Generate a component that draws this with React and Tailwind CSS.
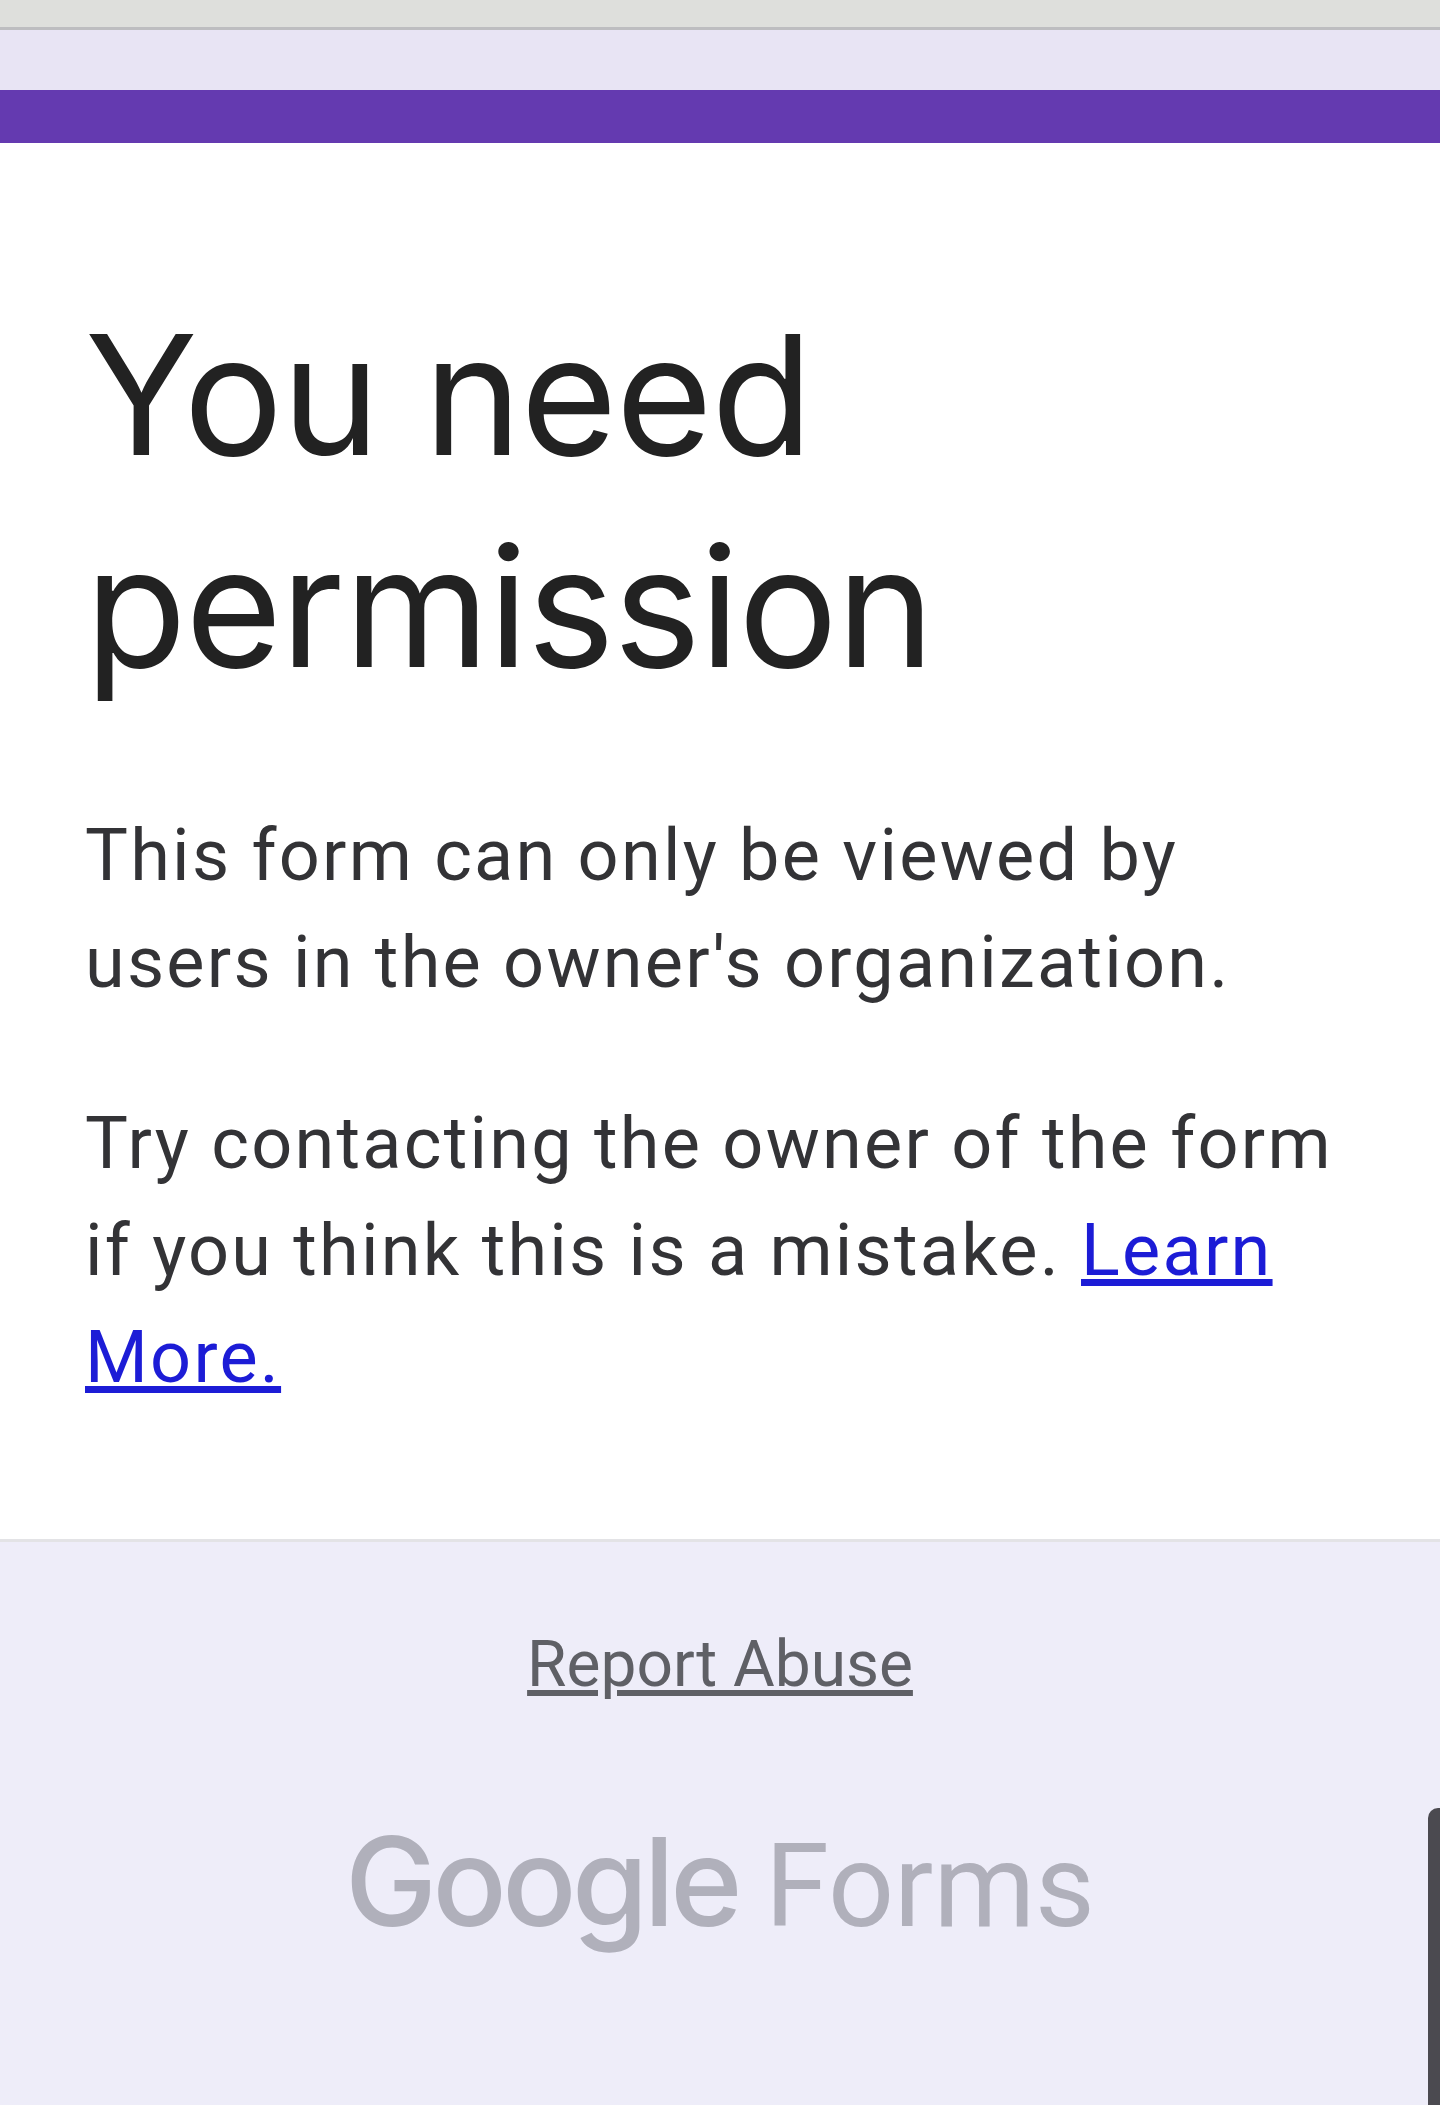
export default function App() {
  return (
    <div className="relative flex h-[2105px] w-[1440px] flex-col overflow-hidden bg-[#eeedf9] font-['Roboto',sans-serif]">
      <div className="h-[27px] bg-[#dedfdc] border-b-[3px] border-[#bdbdc0] box-content"></div>
      <div className="h-[60px] bg-[#e8e4f4]"></div>
      <div className="h-[53px] bg-[#643ab0]"></div>
      <main className="h-[1399px] border-b-[3px] border-[#e3e3e6] bg-white pl-[85px] pr-[87px] pt-[146px]">
        <h1 className="font-['Inter',sans-serif] text-[166px] leading-[212px] font-[380] tracking-[-1.4px] text-[#222222]">You need<br />permission</h1>
        <p className="mt-[89px] text-[72px] leading-[107px] tracking-[2.25px] text-[#333336]">This form can only be viewed by users in the owner's organization.</p>
        <p className="mt-[74px] text-[72px] leading-[107px] tracking-[2.25px] text-[#333336]">Try contacting the owner of the form if you think this is a mistake. <a className="text-[#1c1cd6] underline">Learn More.</a></p>
      </main>
      <footer className="flex flex-col items-center pt-[88px]">
        <a className="text-[64px] leading-[70px] text-[#5f6066] underline">Report Abuse</a>
        <div className="mt-[117px] flex items-baseline gap-[27px] text-[#b0b0bb]">
          <span className="font-['Inter',sans-serif] text-[123px] leading-[130px] font-medium tracking-[-4.5px]">Google</span>
          <span className="text-[116px] leading-[130px]">Forms</span>
        </div>
      </footer>
      <div className="absolute top-[1808px] right-0 h-[297px] w-[12px] rounded-tl-[10px] bg-[#4b4a50]"></div>
    </div>
  );
}
